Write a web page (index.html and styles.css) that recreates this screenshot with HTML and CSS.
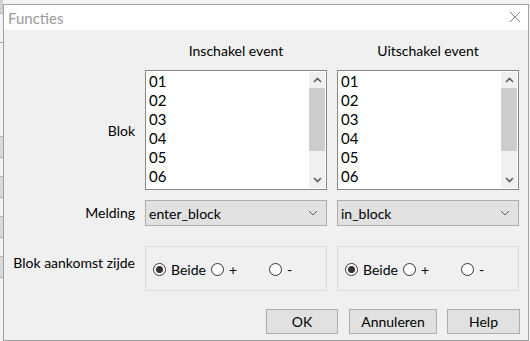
FILE: index.html
```html
<!DOCTYPE html>
<html>
<head>
    <title>Functies</title>
    <meta name="viewport" content="width=device-width, initial-scale=1">
    <link rel="stylesheet" href="styles.css">
</head>
<body>
    <div class="backdrop">
        <div class="bd-tab"></div>
        <div class="bd-rule"></div>
        <div class="bd-key"></div>
        <div class="bd-key"></div>
        <div class="bd-key"></div>
        <div class="bd-key"></div>
    </div>

    <div class="dialog">
        <div class="titlebar">
            <span class="title">Functies</span>
            <svg class="close" width="12" height="12" viewBox="0 0 12 12">
                <path d="M1 1L11 11M11 1L1 11" stroke="#8a8a8a" stroke-width="1" fill="none"/>
            </svg>
        </div>

        <div class="content">
            <div class="form">
                <div></div>
                <div class="col-head">Inschakel event</div>
                <div class="col-head">Uitschakel event</div>

                <div class="row-label">Blok</div>
                <div class="listbox">
                    <div class="items">
                        <div>01</div><div>02</div><div>03</div><div>04</div><div>05</div><div>06</div>
                    </div>
                    <div class="scrollbar">
                        <div class="sb-btn">
                            <svg width="9" height="6" viewBox="0 0 9 6"><path d="M1 5L4.5 1.5L8 5" stroke="#606060" stroke-width="1.6" fill="none"/></svg>
                        </div>
                        <div class="sb-thumb"></div>
                        <div class="sb-track"></div>
                        <div class="sb-btn">
                            <svg width="9" height="6" viewBox="0 0 9 6"><path d="M1 1L4.5 4.5L8 1" stroke="#606060" stroke-width="1.6" fill="none"/></svg>
                        </div>
                    </div>
                </div>
                <div class="listbox">
                    <div class="items">
                        <div>01</div><div>02</div><div>03</div><div>04</div><div>05</div><div>06</div>
                    </div>
                    <div class="scrollbar">
                        <div class="sb-btn">
                            <svg width="9" height="6" viewBox="0 0 9 6"><path d="M1 5L4.5 1.5L8 5" stroke="#606060" stroke-width="1.6" fill="none"/></svg>
                        </div>
                        <div class="sb-thumb"></div>
                        <div class="sb-track"></div>
                        <div class="sb-btn">
                            <svg width="9" height="6" viewBox="0 0 9 6"><path d="M1 1L4.5 4.5L8 1" stroke="#606060" stroke-width="1.6" fill="none"/></svg>
                        </div>
                    </div>
                </div>

                <div class="row-label combo-label">Melding</div>
                <div class="combo">
                    <span>enter_block</span>
                    <svg width="10" height="6" viewBox="0 0 10 6"><path d="M1 1L5 5L9 1" stroke="#606060" stroke-width="1" fill="none"/></svg>
                </div>
                <div class="combo">
                    <span>in_block</span>
                    <svg width="10" height="6" viewBox="0 0 10 6"><path d="M1 1L5 5L9 1" stroke="#606060" stroke-width="1" fill="none"/></svg>
                </div>

                <div class="row-label group-label">Blok aankomst zijde</div>
                <div class="group">
                    <div class="radio"><span class="dot checked"></span>Beide</div>
                    <div class="radio"><span class="dot"></span>+</div>
                    <div class="radio"><span class="dot"></span>-</div>
                </div>
                <div class="group">
                    <div class="radio"><span class="dot checked"></span>Beide</div>
                    <div class="radio"><span class="dot"></span>+</div>
                    <div class="radio"><span class="dot"></span>-</div>
                </div>
            </div>

            <div class="buttons">
                <button class="btn btn-ok">OK</button>
                <button class="btn btn-cancel">Annuleren</button>
                <button class="btn btn-help">Help</button>
            </div>
        </div>
    </div>
</body>
</html>
```

FILE: styles.css
```css
body {
    margin: 0;
    width: 530px;
    height: 341px;
    overflow: hidden;
    display: flex;
    background-color: #f3f3f3;
    font-family: "Segoe UI", Lato, sans-serif;
    font-size: 14px;
    color: #000;
}
.backdrop {
    width: 3px;
    flex-shrink: 0;
}
.bd-tab {
    height: 13px;
    background-color: #d2d2d2;
    border-bottom: 1px solid #b5b5b5;
}
.bd-rule {
    height: 1px;
    margin-top: 28px;
    margin-bottom: 93px;
    background-color: #a8a8a8;
}
.bd-key {
    height: 20px;
    margin-bottom: 18px;
    background-color: #d9d9d9;
    border-top: 1px solid #b0b0b0;
    border-bottom: 1px solid #b0b0b0;
}
.dialog {
    width: 526px;
    height: 337px;
    margin-top: 4px;
    box-sizing: border-box;
    border: 1px solid #a0a0a0;
    background-color: #f0f0f0;
    display: flex;
    flex-direction: column;
}
.titlebar {
    height: 25px;
    background-color: #fff;
    display: flex;
    align-items: center;
    justify-content: space-between;
    padding: 0 7px 0 4px;
}
.title {
    color: #9b9b9b;
    font-size: 15px;
}
.close {
    margin-top: -1px;
}
.form {
    display: grid;
    grid-template-columns: 131px 182px 182px;
    grid-template-rows: 40px 120px 36px 65px;
    column-gap: 10px;
}
.col-head {
    align-self: center;
    text-align: center;
}
.row-label {
    text-align: right;
    align-self: center;
    white-space: nowrap;
}
.combo-label {
    align-self: end;
    line-height: 26px;
}
.group-label {
    align-self: end;
    line-height: 20px;
    padding-bottom: 18px;
}
.listbox {
    box-sizing: border-box;
    border: 1px solid #828790;
    background-color: #fff;
    display: flex;
}
.items {
    flex: 1;
    padding: 1px 0 0 3px;
    line-height: 19px;
    font-size: 15px;
    overflow: hidden;
}
.scrollbar {
    width: 16px;
    margin: 1px 1px 1px 0;
    background-color: #f0f0f0;
    display: flex;
    flex-direction: column;
}
.sb-btn {
    height: 16px;
    display: flex;
    align-items: center;
    justify-content: center;
}
.sb-thumb {
    height: 63px;
    background-color: #cdcdcd;
}
.sb-track {
    flex: 1;
}
.combo {
    align-self: end;
    height: 26px;
    box-sizing: border-box;
    border: 1px solid #adadad;
    background-color: #e1e1e1;
    display: flex;
    align-items: center;
    justify-content: space-between;
    padding: 0 8px 0 3px;
}
.group {
    align-self: end;
    height: 45px;
    box-sizing: border-box;
    border: 1px solid #dcdcdc;
    display: grid;
    grid-template-columns: 58px 58px 58px;
    align-items: center;
    padding: 2px 0 0 7px;
}
.radio {
    display: flex;
    align-items: center;
}
.dot {
    width: 13px;
    height: 13px;
    box-sizing: border-box;
    border: 1px solid #333;
    border-radius: 50%;
    background-color: #fff;
    margin-right: 5px;
    display: flex;
    align-items: center;
    justify-content: center;
}
.dot.checked::after {
    content: "";
    width: 7px;
    height: 7px;
    border-radius: 50%;
    background-color: #333;
}
.buttons {
    display: flex;
    justify-content: flex-end;
    gap: 10px;
    margin-top: 18px;
    padding-right: 8px;
}
.btn {
    height: 25px;
    box-sizing: border-box;
    border: 1px solid #adadad;
    background-color: #e1e1e1;
    font-family: inherit;
    font-size: 14px;
    color: #000;
    padding: 0;
}
.btn-ok {
    width: 72px;
    margin-right: 1px;
}
.btn-cancel {
    width: 88px;
}
.btn-help {
    width: 73px;
}
```
